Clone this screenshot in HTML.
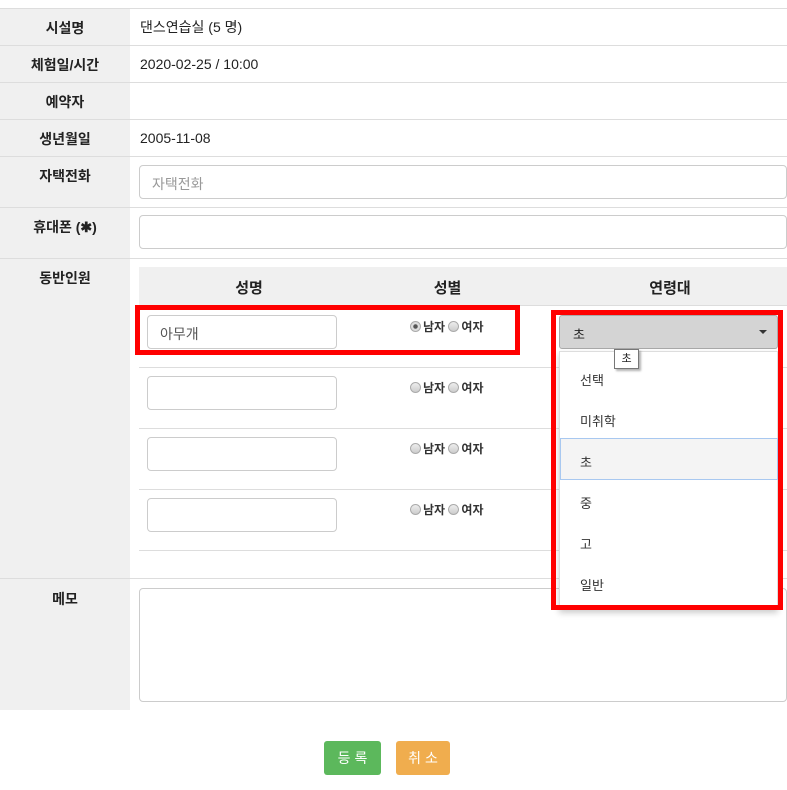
<!DOCTYPE html>
<html><head><meta charset="utf-8"><style>
*{box-sizing:border-box;margin:0;padding:0}
body{width:787px;height:790px;background:#fff;font-family:"Liberation Sans","Noto Sans CJK KR",sans-serif;font-size:14px;color:#222;position:relative;overflow:hidden}
.a{position:absolute}
.lab{position:absolute;left:0;width:130px;background:#f0f0f0;text-align:center;font-weight:bold;font-size:14px;color:#333}
.hl{position:absolute;left:0;width:787px;height:1px;background:#ddd}
.inp{position:absolute;border:1px solid #ccc;border-radius:4px;background:#fff}
.rad{display:inline-block;width:11px;height:11px;border:1px solid #aaa;border-radius:50%;background:linear-gradient(#eee,#ccc);vertical-align:-1px;margin-right:2px}
.g{position:absolute;left:410px;font-size:12px;font-weight:bold;color:#333}
.opt{position:absolute;left:580px;font-size:13px;color:#333;z-index:5}
.z{z-index:4}
</style></head><body>
<div class="lab" style="top:8px;height:702px"></div>
<div class="hl" style="top:8px"></div>
<div class="hl" style="top:45px"></div>
<div class="hl" style="top:82px"></div>
<div class="hl" style="top:119px"></div>
<div class="hl" style="top:156px"></div>
<div class="hl" style="top:207px"></div>
<div class="hl" style="top:258px"></div>
<div class="hl" style="top:578px"></div>
<div class="a" style="top:18px;left:0;width:130px;text-align:center;font-weight:bold">시설명</div>
<div class="a" style="top:55px;left:0;width:130px;text-align:center;font-weight:bold">체험일/시간</div>
<div class="a" style="top:92px;left:0;width:130px;text-align:center;font-weight:bold">예약자</div>
<div class="a" style="top:129px;left:0;width:130px;text-align:center;font-weight:bold">생년월일</div>
<div class="a" style="top:166px;left:0;width:130px;text-align:center;font-weight:bold">자택전화</div>
<div class="a" style="top:217px;left:0;width:130px;text-align:center;font-weight:bold">휴대폰 (✱)</div>
<div class="a" style="top:268px;left:0;width:130px;text-align:center;font-weight:bold">동반인원</div>
<div class="a" style="top:589px;left:0;width:130px;text-align:center;font-weight:bold">메모</div>
<div class="a" style="top:17px;left:140px">댄스연습실 (5 명)</div>
<div class="a" style="top:56px;left:140px">2020-02-25 / 10:00</div>
<div class="a" style="top:130px;left:140px">2005-11-08</div>
<div class="inp" style="left:139px;top:165px;width:648px;height:34px;padding:8px 12px;color:#999">자택전화</div>
<div class="inp" style="left:139px;top:215px;width:648px;height:34px"></div>
<div class="a" style="left:139px;top:267px;width:648px;height:39px;background:#f0f0f0;border-bottom:1px solid #ddd"></div>
<div class="a" style="left:139px;top:277px;width:220px;text-align:center;font-weight:bold;font-size:15px">성명</div>
<div class="a" style="left:360px;top:277px;width:175px;text-align:center;font-weight:bold;font-size:15px">성별</div>
<div class="a" style="left:560px;top:277px;width:220px;text-align:center;font-weight:bold;font-size:15px">연령대</div>
<div class="a" style="left:139px;top:367px;width:648px;height:1px;background:#ddd"></div>
<div class="a" style="left:139px;top:428px;width:648px;height:1px;background:#ddd"></div>
<div class="a" style="left:139px;top:489px;width:648px;height:1px;background:#ddd"></div>
<div class="a" style="left:139px;top:550px;width:648px;height:1px;background:#ddd"></div>
<div class="inp" style="left:147px;top:315px;width:190px;height:34px;padding:8px 12px;color:#555">아무개</div>
<div class="inp" style="left:147px;top:376px;width:190px;height:34px"></div>
<div class="inp" style="left:147px;top:437px;width:190px;height:34px"></div>
<div class="inp" style="left:147px;top:498px;width:190px;height:34px"></div>
<div class="g" style="top:318px"><span class="rad" style="background:radial-gradient(#555 30%,#ddd 40%)"></span>남자 <span class="rad"></span>여자</div>
<div class="g" style="top:379px"><span class="rad"></span>남자 <span class="rad"></span>여자</div>
<div class="g" style="top:440px"><span class="rad"></span>남자 <span class="rad"></span>여자</div>
<div class="g" style="top:501px"><span class="rad"></span>남자 <span class="rad"></span>여자</div>
<div class="inp" style="left:139px;top:588px;width:648px;height:114px"></div>
<div class="a z" style="left:559px;top:315px;width:219px;height:34px;background:#d4d4d4;border:1px solid #aaa;border-radius:3px;padding:8px 13px;font-size:13px">초<span style="position:absolute;right:10px;top:14px;border:4px solid transparent;border-top:4px solid #333"></span></div>
<div class="a z" style="left:559px;top:351px;width:219px;height:259px;background:#fff;border:1px solid #ddd;box-shadow:0 3px 6px rgba(0,0,0,.2)"></div>
<div class="a z" style="left:560px;top:438px;width:218px;height:42px;background:#f4f4f4;border:1px solid #a8c8f0"></div>
<div class="opt" style="top:370px">선택</div>
<div class="opt" style="top:411px">미취학</div>
<div class="opt" style="top:452px">초</div>
<div class="opt" style="top:493px">중</div>
<div class="opt" style="top:534px">고</div>
<div class="opt" style="top:575px">일반</div>
<div class="a" style="z-index:6;left:614px;top:349px;width:25px;height:20px;background:#fff;border:1px solid #777;box-shadow:2px 2px 2px rgba(0,0,0,.3);font-size:11px;text-align:center;line-height:18px">초</div>
<div class="a" style="z-index:7;left:135px;top:305px;width:385px;height:50px;border:5px solid #f00"></div>
<div class="a" style="z-index:7;left:551px;top:310px;width:232px;height:300px;border:5px solid #f00"></div>
<div class="a" style="left:324px;top:741px;width:57px;height:34px;background:#5cb85c;border-radius:3px;color:#fff;text-align:center;line-height:34px;font-size:14px">등 록</div>
<div class="a" style="left:396px;top:741px;width:54px;height:34px;background:#f0ad4e;border-radius:3px;color:#fff;text-align:center;line-height:34px;font-size:14px">취 소</div>
</body></html>
